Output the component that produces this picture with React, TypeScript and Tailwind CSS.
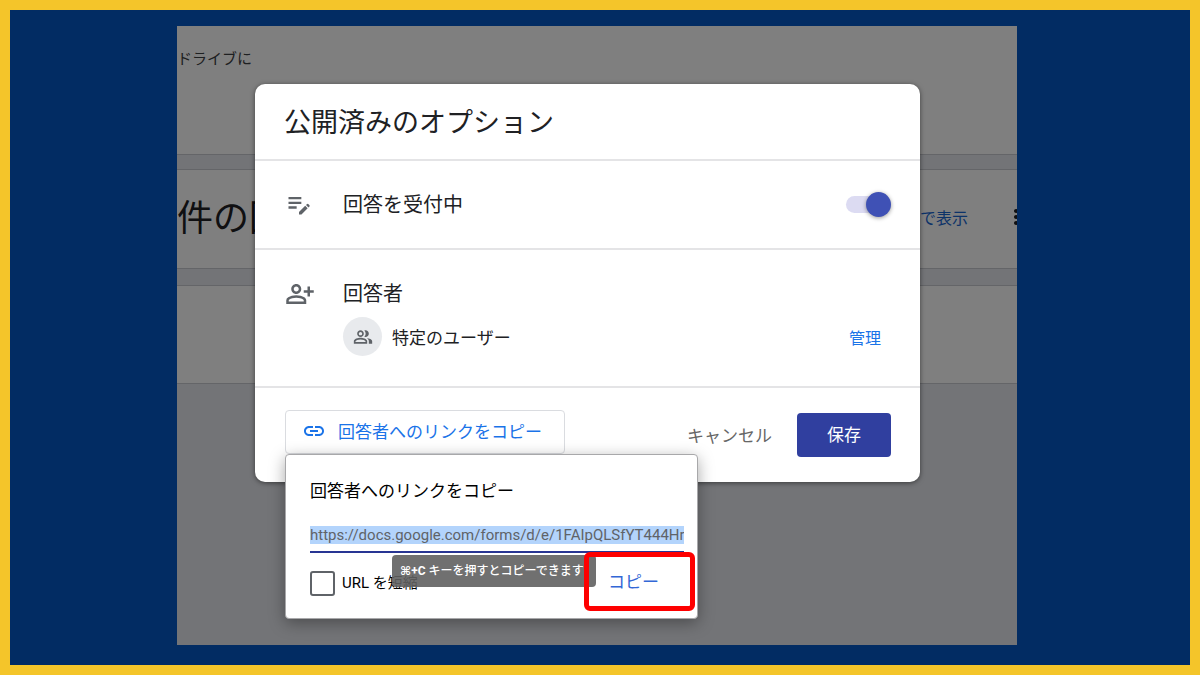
import type { ReactNode } from 'react'
import {
  MdLink,
  MdMoreVert,
  MdOutlineEditNote,
  MdOutlinePeopleAlt,
  MdOutlinePersonAddAlt,
} from 'react-icons/md'

const FORM_URL = 'https://docs.google.com/forms/d/e/1FAIpQLSfYT444Hr'

function ResponsesPage() {
  return (
    <div aria-hidden="true" className="flex flex-col gap-4 text-[#202124]">
      <div className="h-[129px] border-b border-[#c8cad0] bg-white pt-5">
        <p className="text-[15px] leading-6 text-[#3c4043]">ドライブに</p>
      </div>
      <div className="-mt-0.5 flex h-[100px] items-center justify-between overflow-hidden border-y border-[#c8cad0] bg-white pb-1">
        <span className="pb-1 text-[36px] leading-10">件の回</span>
        <div className="flex items-center">
          <span className="w-[84px] text-[16px] text-[#1967d2]">で表示</span>
          <MdMoreVert className="-mr-[11px] size-6" />
        </div>
      </div>
      <div className="h-[99px] border-y border-[#c8cad0] bg-white" />
    </div>
  )
}

function OptionRow({ icon, title, action, children }: {
  icon: ReactNode
  title: ReactNode
  action?: ReactNode
  children?: ReactNode
}) {
  return (
    <section className="flex border-t-2 border-[#e4e4e6] pt-[29px] pr-[29px] pb-[30px] pl-[30px]">
      <div className="w-[58px] shrink-0 text-[#5f6368]">{icon}</div>
      <div className="flex-1">
        <div className="flex items-center justify-between">
          <div className="text-[20px] leading-7">{title}</div>
          {action}
        </div>
        {children}
      </div>
    </section>
  )
}

function CopyLinkPopover() {
  return (
    <div className="absolute top-full left-0 h-[165px] w-[413px] rounded border border-[#a8a8aa] bg-white px-6 pt-[23px] text-black shadow-[0_4px_16px_rgba(0,0,0,0.35)]">
      <label htmlFor="form-url" className="block text-[17px] leading-6">
        回答者へのリンクをコピー
      </label>
      <div className="mt-6 w-[374px] border-b-2 border-[#283593] pb-[7px]">
        <input
          id="form-url"
          readOnly
          value={FORM_URL}
          className="block h-[18px] w-full bg-[#b3d4fc] font-['Roboto',sans-serif] text-[15px] text-[#5f6368] outline-none"
        />
      </div>
      <div className="flex items-start justify-between pt-[18px]">
        <label className="flex items-center gap-[7px] font-['Roboto','Noto_Sans_CJK_JP',sans-serif] text-[15px]">
          <input
            type="checkbox"
            className="size-[25px] appearance-none rounded-[3px] border-2 border-[#5f6368] bg-white"
          />
          URL を短縮
        </label>
        <button className="px-[14px] text-[17px] leading-5 text-[#3367d6]">コピー</button>
      </div>
      <div
        role="tooltip"
        className="absolute top-[100px] left-[106px] h-8 w-[204px] rounded-sm bg-[#616161]/90 pl-2 font-['Roboto','Noto_Sans_CJK_JP',sans-serif] text-[12px] leading-8 font-medium whitespace-nowrap text-white"
      >
        <b className="font-['Roboto','DejaVu_Sans',sans-serif]">⌘+C</b> キーを押すとコピーできます
      </div>
      {/* highlight around the copy button */}
      <div className="pointer-events-none absolute top-[97px] left-[298px] h-[59px] w-[111px] rounded-md border-5 border-[#fe0000]" />
    </div>
  )
}

function PublishDialog() {
  return (
    <div
      role="dialog"
      aria-labelledby="dialog-title"
      className="w-full rounded-[10px] bg-white text-[#202124] shadow-[0_1px_5px_rgba(0,0,0,0.5)]"
    >
      <h1 id="dialog-title" className="px-[29px] pt-[17px] pb-[18px] text-[27px] leading-10">
        公開済みのオプション
      </h1>
      <OptionRow
        icon={<MdOutlineEditNote className="size-7" />}
        title={<label htmlFor="accepting">回答を受付中</label>}
        action={
          <input
            id="accepting"
            type="checkbox"
            role="switch"
            defaultChecked
            className="relative mr-[7px] h-[17px] w-[38px] appearance-none rounded-full bg-[#dcdbf2] after:absolute after:-top-1 after:-right-[7px] after:size-[25px] after:rounded-full after:bg-[#3f51b5] after:shadow-[0_1px_4px_rgba(0,0,0,0.4)]"
          />
        }
      />
      <OptionRow icon={<MdOutlinePersonAddAlt className="size-[30px]" />} title="回答者">
        <div className="mt-[10px] flex items-center gap-[10px] pr-[10px]">
          <span className="grid size-[39px] place-items-center rounded-full bg-[#e8eaed] text-[#5f6368]">
            <MdOutlinePeopleAlt className="size-5" />
          </span>
          <span className="flex-1 text-[17px]">特定のユーザー</span>
          <button className="text-[16px] text-[#1a73e8]">管理</button>
        </div>
      </OptionRow>
      <div className="flex items-start justify-between border-t-2 border-[#e4e4e6] pt-[22px] pr-[29px] pb-[25px] pl-[30px]">
        <div className="relative">
          <button className="flex h-11 w-[280px] items-center gap-3 rounded border border-[#dadce0] pb-[3px] pl-4 text-[17px] text-[#1a73e8]">
            <MdLink className="size-6" />
            回答者へのリンクをコピー
          </button>
          <CopyLinkPopover />
        </div>
        <div className="flex items-center gap-[25px] pt-[3px] text-[17px]">
          <button className="text-[#666666]">キャンセル</button>
          <button className="h-11 w-[94px] rounded bg-[#303f9f] pb-[3px] text-white">保存</button>
        </div>
      </div>
    </div>
  )
}

export default function App() {
  return (
    <main
      lang="ja"
      className="flex min-h-screen justify-center border-10 border-[#f4c52a] bg-[#022c63] pt-4 pr-[22px] pb-5 pl-4 font-['Noto_Sans_CJK_JP',sans-serif]"
    >
      <div className="relative w-full max-w-[840px] bg-[#e6e8ee]">
        <ResponsesPage />
        <div className="absolute inset-0 bg-black/50 pt-[58px] pr-[97px] pl-[78px]">
          <PublishDialog />
        </div>
      </div>
    </main>
  )
}
